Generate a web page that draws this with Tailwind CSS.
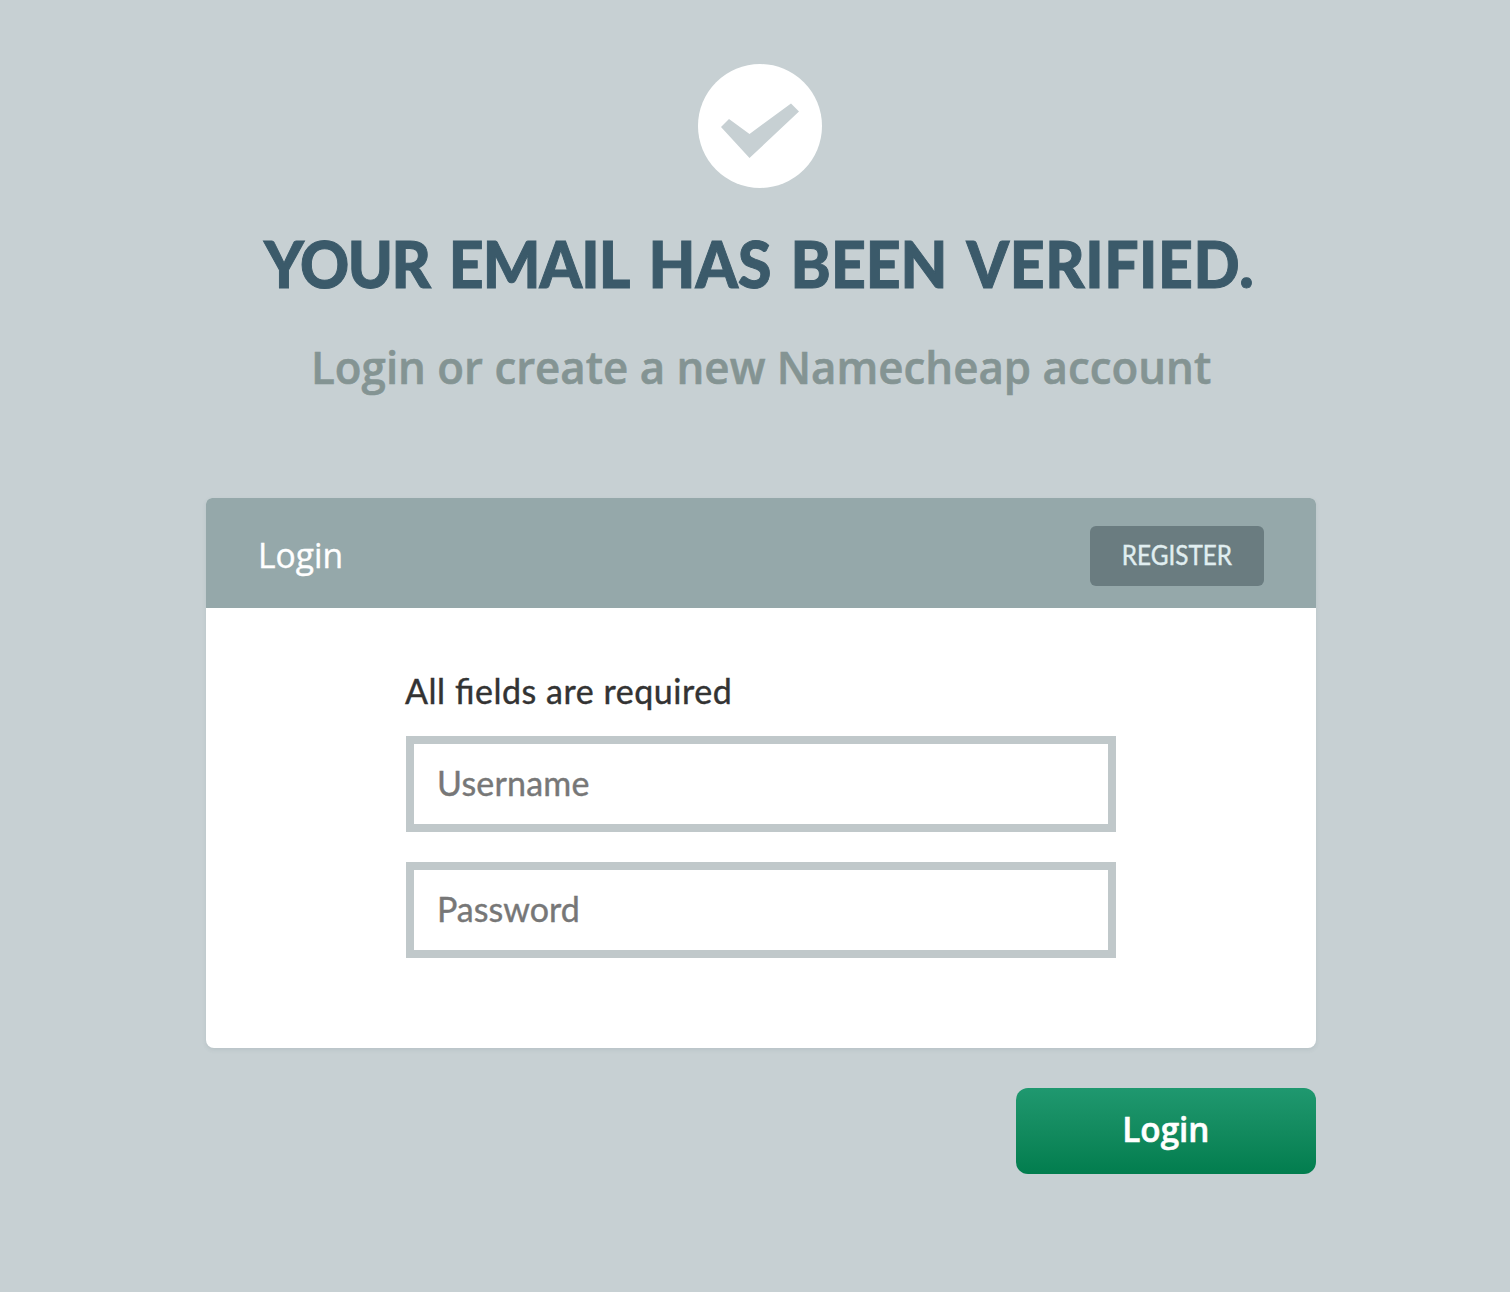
<!DOCTYPE html>
<html lang="en">
<head>
<meta charset="utf-8">
<title>Email verified</title>
<script src="https://cdn.jsdelivr.net/npm/@tailwindcss/browser@4"></script>
</head>
<body class="min-h-screen overflow-x-hidden bg-[#c7d0d3] font-['Open_Sans',sans-serif]">
<main class="mx-auto flex w-[1110px] translate-x-[6px] flex-col items-center pt-16">
  <svg class="mr-[2px] size-[124px]" viewBox="0 0 124 124" aria-hidden="true"><circle cx="62" cy="62" r="62" fill="#fff"/><path d="M31 55 51.500 70 93 39.500 101 47.500 51.500 94 23 63Z" fill="#c7d0d3"/></svg>
  <h1 class="mt-[35px] mr-1 h-20 scale-x-[.927] font-['Lato',sans-serif] text-[65.5px] leading-20 font-black whitespace-nowrap text-[#3b5a6a] [word-spacing:5px] [-webkit-text-stroke:1px]"><span class="tracking-[-1.500px]">YOUR</span> <span class="tracking-[-1px]">EMAIL</span> HAS BEEN <span class="tracking-[0.6px]">VERIFIED.</span></h1>
  <p class="mt-8 h-16 scale-x-[.974] text-[45px] leading-16 font-semibold whitespace-nowrap text-[#849493] [-webkit-text-stroke:0.6px]">Login or create a new Namecheap account</p>
  <section class="mt-[99px] h-[550px] w-full rounded-t-md rounded-b-lg bg-white shadow-[0_2px_4px_rgba(80,110,115,0.12)]">
    <header class="flex h-[110px] items-center justify-between rounded-t-md bg-[#95a8aa] px-[52px] pt-[6px]">
      <h2 class="-mt-[2px] origin-left scale-x-[.96] text-[35px] text-white [-webkit-text-stroke:0.4px]">Login</h2>
      <button type="button" class="h-[60px] w-[174px] rounded-md bg-[#6a7c80] pb-[2px] font-['Lato',sans-serif] text-[26px] text-[#e0eef0]"><span class="inline-block scale-x-[.935] [-webkit-text-stroke:0.4px]">REGISTER</span></button>
    </header>
    <form id="login" class="flex flex-col px-[200px] pt-[58px] font-['Lato',sans-serif]">
      <p class="-ml-px mb-[20px] text-[34px] leading-[50px] tracking-[0.55px] text-[#333] [-webkit-text-stroke:0.4px] [font-feature-settings:'liga'_1]">All fields are required</p>
      <input type="text" placeholder="Username" class="mb-[30px] h-24 border-8 border-[#c0c8ca] bg-white px-[23px] pb-[3px] text-[34px] tracking-[0.2px] outline-none placeholder:text-[#777] [-webkit-text-stroke:0.4px]">
      <input type="password" placeholder="Password" class="h-24 border-8 border-[#c0c8ca] bg-white px-[23px] pb-[3px] text-[34px] outline-none placeholder:text-[#777] [-webkit-text-stroke:0.4px]">
    </form>
  </section>
  <button type="submit" form="login" class="mt-10 h-[86px] w-[300px] self-end rounded-xl bg-linear-to-b from-[#1f986f] to-[#027d4e] pb-[3px] text-[35px] font-semibold text-white"><span class="inline-block scale-x-[.95] [-webkit-text-stroke:0.6px]">Login</span></button>
</main>
</body>
</html>
